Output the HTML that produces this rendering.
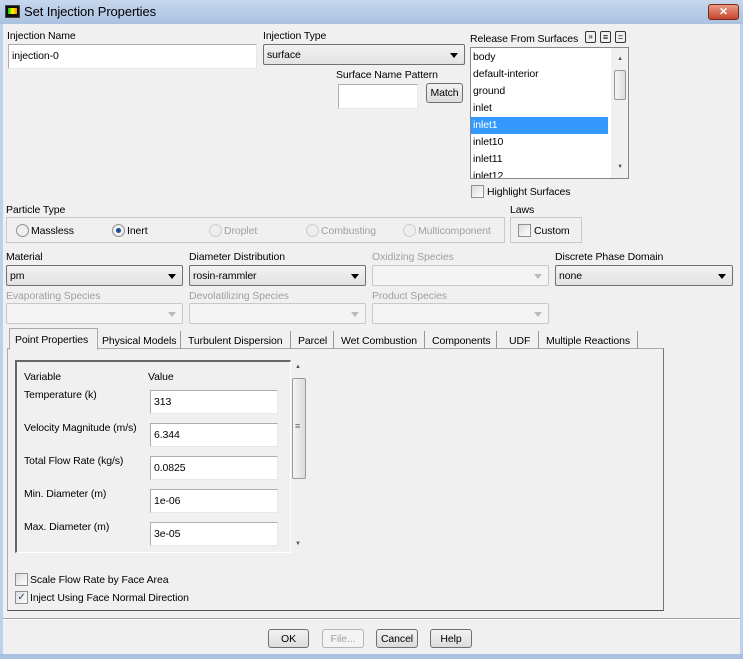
<!DOCTYPE html>
<html><head><meta charset="utf-8"><style>
*{box-sizing:border-box;margin:0;padding:0}
body{width:743px;height:659px;overflow:hidden;background:#f0f0f0;font-family:"Liberation Sans",sans-serif;font-size:10.5px;letter-spacing:-0.1px;color:#000;position:relative}
.a{position:absolute;white-space:nowrap}
.tb{position:absolute;left:0;top:0;width:743px;height:24px;background:linear-gradient(#c7d7ec,#a9c1e0)}
.frame{position:absolute;background:#bcd2ec}
.inp{position:absolute;background:#fff;border:1px solid #abadb3;border-right-color:#e3e9ef;border-bottom-color:#e3e9ef;padding:5px 3px;white-space:nowrap}
.sel{position:absolute;border:1px solid #707070;border-radius:2px;background:linear-gradient(#f2f2f2,#e2e2e2);padding:4px 3px;white-space:nowrap}
.sel::after{content:"";position:absolute;right:6px;top:8px;border:4px solid transparent;border-top:5px solid #000;border-bottom:0}
.dis{border-color:#c8c8c8;background:#f4f4f4}
.dis::after{border-top-color:#bbb}
.g{color:#a0a0a0}
.btn{position:absolute;border:1px solid #707070;border-radius:3px;background:linear-gradient(#f2f2f2,#dcdcdc);text-align:center;line-height:18px;white-space:nowrap}
.cb{position:absolute;width:13px;height:13px;border:1px solid #8e8f8f;background:linear-gradient(135deg,#dcdcdc,#fff)}
.rd{position:absolute;width:13px;height:13px;border:1px solid #8e8f8f;border-radius:50%;background:#eee}
.rdg{border-color:#ccc}
.tab{position:absolute;top:331px;height:18px;border-right:1px solid #999;padding-top:4px;white-space:nowrap}
</style></head><body>
<div class="tb"></div>
<div class="frame" style="left:0;top:24px;width:3px;height:635px"></div>
<div class="frame" style="left:740px;top:24px;width:3px;height:635px"></div>
<div class="frame" style="left:0;top:654px;width:743px;height:5px;background:#a9c1e0"></div>
<div class="a" style="left:5px;top:5px;width:15px;height:13px;background:#111;border:1px solid #444"><div style="position:absolute;left:2px;top:2px;width:9px;height:6px;background:linear-gradient(90deg,#0c0,#ff0,#f80)"></div></div>
<div class="a" style="left:24px;top:4px;font-size:13px">Set Injection Properties</div>
<div class="a" style="left:708px;top:4px;width:31px;height:16px;border-radius:3px;background:linear-gradient(#e89a86,#c5442c);border:1px solid #7a2a1a;color:#fff;text-align:center;font-weight:bold;line-height:14px">✕</div>

<div class="a" style="left:7px;top:30px">Injection Name</div>
<div class="inp" style="left:8px;top:44px;width:249px;height:25px">injection-0</div>
<div class="a" style="left:263px;top:30px">Injection Type</div>
<div class="sel" style="left:263px;top:44px;width:202px;height:21px">surface</div>
<div class="a" style="left:336px;top:69px">Surface Name Pattern</div>
<div class="inp" style="left:338px;top:84px;width:80px;height:25px"></div>
<div class="btn" style="left:426px;top:83px;width:37px;height:20px">Match</div>
<div class="a" style="left:470px;top:33px">Release From Surfaces</div>
<div class="a" style="left:585px;top:31px;width:11px;height:12px;border:1px solid #333;border-radius:2px;font-size:8px;line-height:10px;text-align:center">»</div>
<div class="a" style="left:600px;top:31px;width:11px;height:12px;border:1px solid #333;border-radius:2px;font-size:9px;line-height:10px;text-align:center">≡</div>
<div class="a" style="left:615px;top:31px;width:11px;height:12px;border:1px solid #333;border-radius:2px;font-size:9px;line-height:10px;text-align:center">=</div>
<div class="a" style="left:470px;top:47px;width:159px;height:132px;background:#fff;border:1px solid #828790;overflow:hidden">
 <div style="line-height:17px;padding-left:2px;padding-top:1px">body<br>default-interior<br>ground<br>inlet<br><div style="background:#3399ff;color:#fff;width:137px;margin-left:-2px;padding-left:2px">inlet1</div>inlet10<br>inlet11<br>inlet12</div>
 <div style="position:absolute;right:0;top:0;width:17px;height:130px;background:#f0f0f0"></div>
 <div style="position:absolute;right:2px;top:22px;width:12px;height:30px;background:linear-gradient(90deg,#f4f4f4,#dcdcdc);border:1px solid #999;border-radius:2px"></div>
 <div style="position:absolute;right:5px;top:8px;font-size:6px;color:#555">▲</div>
 <div style="position:absolute;right:5px;top:116px;font-size:6px;color:#555">▼</div>
</div>
<div class="cb" style="left:471px;top:185px"></div>
<div class="a" style="left:487px;top:186px">Highlight Surfaces</div>

<div class="a" style="left:6px;top:204px">Particle Type</div>
<div class="a" style="left:6px;top:217px;width:499px;height:26px;border:1px solid #c9c9c9"></div>
<div class="rd" style="left:16px;top:224px"></div><div class="a" style="left:31px;top:225px">Massless</div>
<div class="rd" style="left:112px;top:224px"><div style="position:absolute;left:3px;top:3px;width:5px;height:5px;border-radius:50%;background:#1d4f91"></div></div><div class="a" style="left:127px;top:225px">Inert</div>
<div class="rd rdg" style="left:209px;top:224px"></div><div class="a g" style="left:224px;top:225px">Droplet</div>
<div class="rd rdg" style="left:306px;top:224px"></div><div class="a g" style="left:321px;top:225px">Combusting</div>
<div class="rd rdg" style="left:403px;top:224px"></div><div class="a g" style="left:418px;top:225px">Multicomponent</div>
<div class="a" style="left:510px;top:204px">Laws</div>
<div class="a" style="left:510px;top:217px;width:72px;height:26px;border:1px solid #c9c9c9"></div>
<div class="cb" style="left:518px;top:224px"></div><div class="a" style="left:534px;top:225px">Custom</div>

<div class="a" style="left:6px;top:251px">Material</div>
<div class="sel" style="left:6px;top:265px;width:177px;height:21px">pm</div>
<div class="a" style="left:189px;top:251px">Diameter Distribution</div>
<div class="sel" style="left:189px;top:265px;width:177px;height:21px">rosin-rammler</div>
<div class="a g" style="left:372px;top:251px">Oxidizing Species</div>
<div class="sel dis" style="left:372px;top:265px;width:177px;height:21px"></div>
<div class="a" style="left:555px;top:251px">Discrete Phase Domain</div>
<div class="sel" style="left:555px;top:265px;width:178px;height:21px">none</div>
<div class="a g" style="left:6px;top:290px">Evaporating Species</div>
<div class="sel dis" style="left:6px;top:303px;width:177px;height:21px"></div>
<div class="a g" style="left:189px;top:290px">Devolatilizing Species</div>
<div class="sel dis" style="left:189px;top:303px;width:177px;height:21px"></div>
<div class="a g" style="left:372px;top:290px">Product Species</div>
<div class="sel dis" style="left:372px;top:303px;width:177px;height:21px"></div>

<div class="a" style="left:7px;top:348px;width:657px;height:263px;border:1px solid #aaa;border-right-color:#777;border-bottom-color:#555"></div>
<div class="a" style="left:9px;top:328px;width:89px;height:22px;background:#f0f0f0;border:1px solid #aaa;border-bottom:none;padding:5px 0 0 5px">Point Properties</div>
<div class="tab" style="left:98px;width:83px;padding-left:4px">Physical Models</div>
<div class="tab" style="left:181px;width:110px;padding-left:7px">Turbulent Dispersion</div>
<div class="tab" style="left:291px;width:43px;padding-left:7px">Parcel</div>
<div class="tab" style="left:334px;width:91px;padding-left:7px">Wet Combustion</div>
<div class="tab" style="left:425px;width:72px;padding-left:7px">Components</div>
<div class="tab" style="left:497px;width:42px;padding-left:12px">UDF</div>
<div class="tab" style="left:539px;width:99px;padding-left:7px">Multiple Reactions</div>

<div class="a" style="left:15px;top:360px;width:276px;height:193px;border:1px solid #888;border-right-color:#fff;border-bottom-color:#fff;border-top-width:2px;border-left-width:2px;border-top-color:#666;border-left-color:#666"></div>
<div class="a" style="left:24px;top:371px">Variable</div>
<div class="a" style="left:148px;top:371px">Value</div>
<div class="a" style="left:24px;top:389px">Temperature (k)</div>
<div class="inp" style="left:150px;top:390px;width:128px;height:24px">313</div>
<div class="a" style="left:24px;top:422px">Velocity Magnitude (m/s)</div>
<div class="inp" style="left:150px;top:423px;width:128px;height:24px">6.344</div>
<div class="a" style="left:24px;top:455px">Total Flow Rate (kg/s)</div>
<div class="inp" style="left:150px;top:456px;width:128px;height:24px">0.0825</div>
<div class="a" style="left:24px;top:488px">Min. Diameter (m)</div>
<div class="inp" style="left:150px;top:489px;width:128px;height:24px">1e-06</div>
<div class="a" style="left:24px;top:521px">Max. Diameter (m)</div>
<div class="inp" style="left:150px;top:522px;width:128px;height:24px">3e-05</div>
<div class="a" style="left:295px;top:364px;font-size:6px;color:#555">▲</div>
<div class="a" style="left:292px;top:378px;width:14px;height:101px;background:linear-gradient(90deg,#f4f4f4,#dcdcdc);border:1px solid #999;border-radius:2px"></div>
<div class="a" style="left:295px;top:421px;font-size:9px;color:#666">≡</div>
<div class="a" style="left:295px;top:541px;font-size:6px;color:#555">▼</div>

<div class="cb" style="left:15px;top:573px"></div>
<div class="a" style="left:30px;top:574px">Scale Flow Rate by Face Area</div>
<div class="cb" style="left:15px;top:591px;font-size:10px;line-height:11px;color:#1d3f80;text-align:center">✓</div>
<div class="a" style="left:30px;top:592px">Inject Using Face Normal Direction</div>

<div class="a" style="left:3px;top:618px;width:737px;height:2px;border-top:1px solid #a0a0a0;border-bottom:1px solid #fff"></div>
<div class="btn" style="left:268px;top:629px;width:41px;height:19px">OK</div>
<div class="btn" style="left:322px;top:629px;width:42px;height:19px;border-color:#b5b5b5;color:#a0a0a0;background:#f4f4f4">File...</div>
<div class="btn" style="left:376px;top:629px;width:42px;height:19px">Cancel</div>
<div class="btn" style="left:430px;top:629px;width:42px;height:19px">Help</div>
</body></html>
